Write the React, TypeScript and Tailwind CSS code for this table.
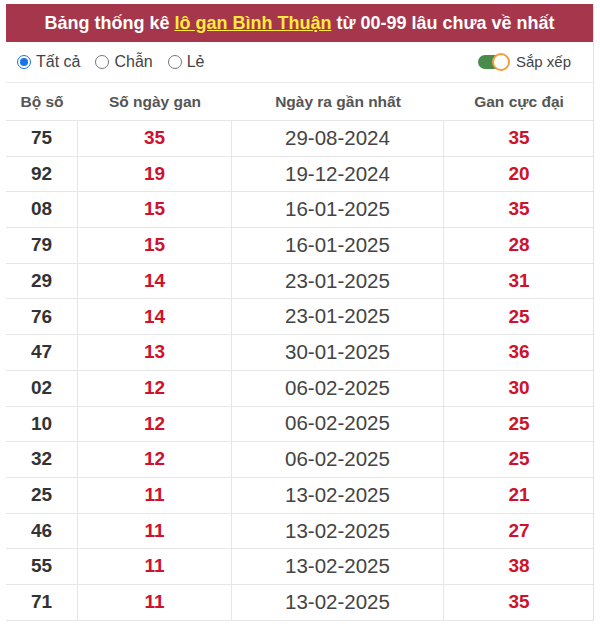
import React from "react";

const rows: [string, string, string, string][] = [
  ["75", "35", "29-08-2024", "35"],
  ["92", "19", "19-12-2024", "20"],
  ["08", "15", "16-01-2025", "35"],
  ["79", "15", "16-01-2025", "28"],
  ["29", "14", "23-01-2025", "31"],
  ["76", "14", "23-01-2025", "25"],
  ["47", "13", "30-01-2025", "36"],
  ["02", "12", "06-02-2025", "30"],
  ["10", "12", "06-02-2025", "25"],
  ["32", "12", "06-02-2025", "25"],
  ["25", "11", "13-02-2025", "21"],
  ["46", "11", "13-02-2025", "27"],
  ["55", "11", "13-02-2025", "38"],
  ["71", "11", "13-02-2025", "35"],
];

function Radio({ checked, label }: { checked?: boolean; label: string }) {
  return (
    <label className="flex items-center gap-[5px]">
      {checked ? (
        <span className="w-[14px] h-[14px] rounded-full border border-[#1a73e8] flex items-center justify-center bg-white">
          <span className="w-[8px] h-[8px] rounded-full bg-[#1a73e8]" />
        </span>
      ) : (
        <span className="w-[14px] h-[14px] rounded-full border border-[#777] bg-white" />
      )}
      <span>{label}</span>
    </label>
  );
}

export default function App() {
  return (
    <div
      className="w-[600px] h-[626px] bg-white overflow-hidden pt-[4px] pl-[6px] pr-[6px]"
      style={{ fontFamily: '"Liberation Sans", Arial, sans-serif' }}
    >
      <div className="border-r border-[#e2e2e2]">
        <div className="h-[38px] pt-[1px] bg-[#a6364b] flex items-center justify-center text-white font-bold text-[18px]">
          <span>
            Bảng thống kê{" "}
            <span className="text-[#ffeb3b] underline">lô gan Bình Thuận</span>{" "}
            từ 00-99 lâu chưa về nhất
          </span>
        </div>
        <div className="h-[41px] flex items-center justify-between pl-[11px] pr-[22px] text-[16px] text-[#444] border-b border-[#ececec]">
          <div className="flex items-center gap-[15px]">
            <Radio checked label="Tất cả" />
            <Radio label="Chẫn" />
            <Radio label="Lẻ" />
          </div>
          <div className="flex items-center gap-[6px] text-[15px]">
            <div className="relative w-[32px] h-[18px]">
              <div className="absolute left-0 top-[2px] w-[30px] h-[14px] rounded-full bg-[#4a8a4a]" />
              <div className="absolute right-0 top-0 w-[18px] h-[18px] rounded-full bg-white border-2 border-[#f0a040]" />
            </div>
            <span>Sắp xếp</span>
          </div>
        </div>
        <div className="grid grid-cols-[72px_154px_212px_150px] h-[38px] items-center text-[15.5px] font-bold text-[#555] text-center border-b border-[#e6e6e6]">
          <div>Bộ số</div>
          <div>Số ngày gan</div>
          <div>Ngày ra gần nhất</div>
          <div>Gan cực đại</div>
        </div>
        {rows.map((r, i) => (
          <div
            key={i}
            className="grid grid-cols-[72px_154px_212px_150px] h-[35.7px] items-stretch text-[19px] text-center border-b border-[#e6e6e6]"
          >
            <div className="flex items-center justify-center font-bold text-[#333] border-r border-[#e6e6e6]">{r[0]}</div>
            <div className="flex items-center justify-center font-bold text-[#d0112b] border-r border-[#e6e6e6]">{r[1]}</div>
            <div className="flex items-center justify-center text-[20.5px] text-[#444] border-r border-[#e6e6e6]">{r[2]}</div>
            <div className="flex items-center justify-center font-bold text-[#d0112b]">{r[3]}</div>
          </div>
        ))}
      </div>
    </div>
  );
}
